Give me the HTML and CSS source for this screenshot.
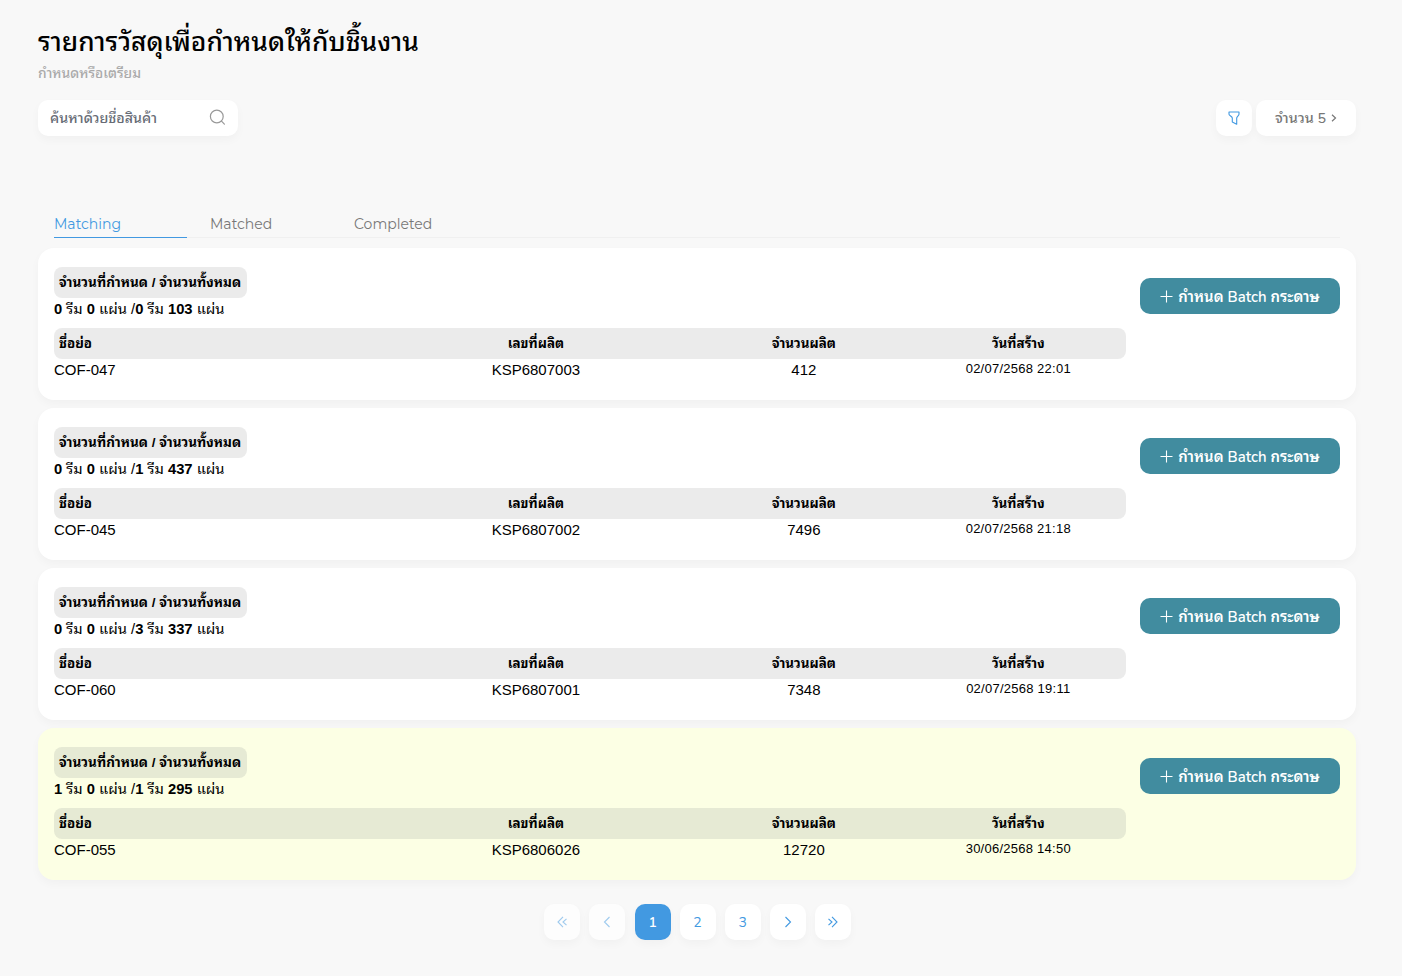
FILE: index.html
```
<!DOCTYPE html>
<html lang="th">
<head>
<meta charset="utf-8">
<title>รายการวัสดุ</title>
<link rel="stylesheet" href="styles.css">
</head>
<body>
<main class="page">
  <h1 class="title">รายการวัสดุเพื่อกำหนดให้กับชิ้นงาน</h1>
  <p class="subtitle">กำหนดหรือเตรียม</p>
  <div class="toolbar">
    <label class="search"><span class="search-text">ค้นหาด้วยชื่อสินค้า</span>
      <svg width="17" height="17" viewBox="0 0 17 17" fill="none" stroke="#999" stroke-width="1.2" stroke-linecap="round"><circle cx="7.800" cy="7.500" r="6.400"/><path d="M12.500 12.200l2.900 2.900"/></svg>
    </label>
    <div class="tools">
      <button class="filter"><svg width="12" height="14" viewBox="0 0 12 14" fill="none" stroke="#4299e1" stroke-width="1.1" stroke-linejoin="round"><path d="M1 1h10v2.200C11 4.600 8.700 5.500 8.700 7v6.200L4.300 11V7C4.300 5.500 1 4.600 1 3.200z"/></svg></button>
      <button class="amount"><span class="amount-text">จำนวน 5</span><svg width="6" height="8" viewBox="0 0 6 8" fill="none" stroke="#777" stroke-width="1.2"><path d="M1 .8L4.500 4 1 7.200"/></svg></button>
    </div>
  </div>
  <nav class="tabs"><a class="tab active">Matching</a><a class="tab">Matched</a><a class="tab last">Completed</a></nav>
  <section class="cards" id="cards"></section>
  <nav class="pager">
    <button class="pg off"><svg width="12" height="12" viewBox="0 0 12 12"><path d="M7 .8L2 6l5 5.200M10.500 2.800L7 6l3.500 3.200"/></svg></button>
    <button class="pg off"><svg width="12" height="12" viewBox="0 0 12 12"><path d="M8.500 1l-5 5 5 5"/></svg></button>
    <button class="pg current">1</button>
    <button class="pg">2</button>
    <button class="pg">3</button>
    <button class="pg"><svg width="12" height="12" viewBox="0 0 12 12"><path d="M3.500 1l5 5-5 5"/></svg></button>
    <button class="pg"><svg width="12" height="12" viewBox="0 0 12 12"><path d="M5 .8L10 6l-5 5.200M1.500 2.800L5 6 1.500 9.200"/></svg></button>
  </nav>
</main>
<script src="app.js"></script>
</body>
</html>
```
FILE: styles.css
```
* { box-sizing: border-box; }
body { margin: 0; background: #f8f8f8; color: #000; font-family: "Liberation Sans", "Noto Sans Thai Looped", "Loma", "Garuda", "Noto Sans Thai", sans-serif; }
button { border: 0; font: inherit; padding: 0; }
svg { flex: none; display: block; }
.page { height: 976px; padding: 24px 46px 0 38px; white-space: nowrap; overflow: hidden; }
.title { margin: 0; height: 36px; line-height: 36px; font-size: 26.300px; font-weight: 500; }
.subtitle { margin: 4px 0 0; height: 18px; line-height: 20px; font-size: 13.800px; font-weight: 500; color: #aaa; }
.toolbar { margin-top: 18px; height: 36px; display: flex; justify-content: space-between; }
.search, .filter, .amount { background: #fff; border-radius: 10px; box-shadow: 0 4px 10px rgba(0,0,0,.03); display: flex; align-items: center; }
.search { width: 200px; padding: 0 12px 1px; justify-content: space-between; font-size: 14.200px; font-weight: 500; color: #666b75; }
.search-text { padding-bottom: 2px; }
.tools { display: flex; gap: 4px; }
.filter { width: 36px; padding-bottom: 1px; justify-content: center; }
.amount { width: 100px; justify-content: center; gap: 5px; font-family: Nunito, "Open Sans", "Noto Sans Thai Looped", "Loma", "Garuda", sans-serif; font-size: 14.300px; font-weight: 500; color: #777; }
.amount-text { padding-bottom: 3px; }
.tabs { margin: 74px 16px 0; height: 28px; display: flex; border-bottom: 1px solid #f0f0f0; font-family: Montserrat, Inter, sans-serif; font-size: 14px; line-height: 28px; color: #777; }
.tab { width: 144px; }
.tab.active { width: 133px; margin-right: 23px; height: 28px; color: #4299e1; border-bottom: 1px solid #4299e1; }
.cards { margin-top: 10px; display: grid; gap: 8px; }
.card { height: 152px; padding: 19px 16px 0; background: #fff; border-radius: 16px; box-shadow: 0 4px 10px rgba(0,0,0,.03); display: flex; justify-content: space-between; }
.card.ready { background: #fcffe4; }
.info { width: 1072px; }
.chip { width: 193px; height: 31px; padding-left: 5px; border-radius: 8px; background: rgba(0,0,0,.08); line-height: 32px; font-size: 13.500px; font-weight: 700; }
.card.ready .chip, .card.ready .head { background: #e6ead4; }
.count { height: 22px; line-height: 22px; font-size: 14.750px; }
.head, .row { display: grid; grid-template-columns: 30% 30% 20% 20%; text-align: center; }
.head { margin-top: 8px; height: 31px; line-height: 32px; border-radius: 8px; background: rgba(0,0,0,.08); font-size: 13.400px; font-weight: 700; }
.head span:not(:first-child) { padding-right: 1px; }
.head :first-child { padding-left: 5px; text-align: left; }
.row { line-height: 22px; font-size: 15px; }
.row :first-child { text-align: left; }
.row span:not(:first-child) { padding-right: 1px; }
.row .date { font-size: 13px; line-height: 20px; letter-spacing: .25px; }
.assign { width: 200px; height: 36px; margin-top: 11px; border-radius: 10px; background: #418c9f; color: #fff; display: flex; align-items: center; justify-content: center; gap: 5px; font-family: Nunito, "Open Sans", "Noto Sans Thai Looped", "Loma", "Garuda", sans-serif; font-size: 14.900px; font-weight: 600; }
.assign-text { padding-bottom: 3px; }
.pager { margin: 24px 1px 0 0; padding-left: 506px; display: flex; gap: 9.200px; }
.pg { width: 36px; height: 36px; border-radius: 10px; background: #fff; box-shadow: 0 4px 10px rgba(0,0,0,.03); color: #4299e1; display: flex; align-items: center; justify-content: center; font-family: Nunito, "Noto Sans", sans-serif; font-size: 14px; }
.pg svg { fill: none; stroke: #4299e1; stroke-width: 1.1; }
.pg.off { background: #fdfdfd; }
.pg.off svg { opacity: .5; }
.pg.current { position: relative; left: .4px; background: #4299e1; color: #fff; font-weight: 600; }
```
FILE: app.js
```
const items = [
  [0, 0, 0, 103, 'COF-047', 'KSP6807003', '412', '02/07/2568 22:01'],
  [0, 0, 1, 437, 'COF-045', 'KSP6807002', '7496', '02/07/2568 21:18'],
  [0, 0, 3, 337, 'COF-060', 'KSP6807001', '7348', '02/07/2568 19:11'],
  [1, 0, 1, 295, 'COF-055', 'KSP6806026', '12720', '30/06/2568 14:50']
];
document.getElementById('cards').innerHTML = items.map(([a, b, c, d, name, lot, qty, date]) => `
  <article class="card ${a ? 'ready' : ''}">
    <div class="info">
      <div class="chip"><span class="chip-text">จำนวนที่กำหนด / จำนวนทั้งหมด</span></div>
      <div class="count"><b>${a}</b> รีม <b>${b}</b> แผ่น /<b>${c}</b> รีม <b>${d}</b> แผ่น</div>
      <div class="head"><span>ชื่อย่อ</span><span>เลขที่ผลิต</span><span>จำนวนผลิต</span><span>วันที่สร้าง</span></div>
      <div class="row"><span>${name}</span><span>${lot}</span><span>${qty}</span><span class="date">${date}</span></div>
    </div>
    <button class="assign"><svg width="13" height="13" viewBox="0 0 13 13" stroke="#fff" stroke-width="1.1"><path d="M6.500.5v12M.5 6.500h12"/></svg><span class="assign-text">กำหนด Batch กระดาษ</span></button>
  </article>`).join('');
```
